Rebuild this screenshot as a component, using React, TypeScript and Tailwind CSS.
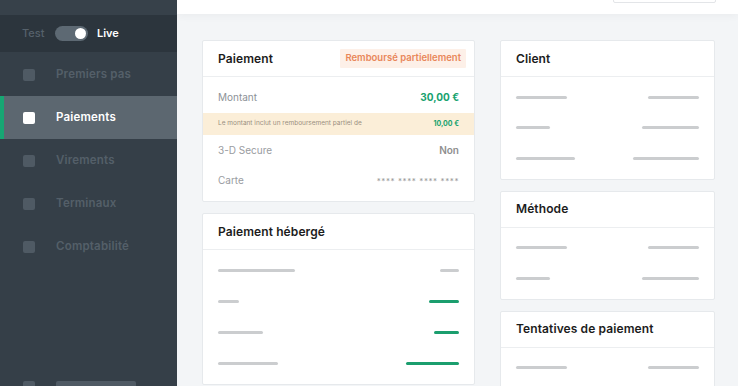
import React from 'react';

const font = { fontFamily: 'Inter, "Noto Sans", "Liberation Sans", sans-serif' };

type NavItem = { label: string; active?: boolean };

const navItems: NavItem[] = [
  { label: 'Premiers pas' },
  { label: 'Paiements', active: true },
  { label: 'Virements' },
  { label: 'Terminaux' },
  { label: 'Comptabilité' },
];

function Sidebar() {
  return (
    <aside className="w-[177px] shrink-0 h-full bg-[#353f48] flex flex-col overflow-hidden">
      <div className="h-[15px] shrink-0 bg-[#37414a]" />
      {/* Test / Live switch */}
      <div className="h-[37px] shrink-0 bg-[#2c353d] flex items-center pl-[22px]">
        <span className="text-[11px] font-medium text-[#56616b] w-[33px]">Test</span>
        <div className="w-[33px] h-[15px] rounded-full bg-[#5d6973] flex items-center justify-end pr-[2px]">
          <div className="w-[11px] h-[11px] rounded-full bg-white" />
        </div>
        <span className="ml-[9px] text-[11px] font-semibold text-white">Live</span>
      </div>

      <nav className="flex flex-col shrink-0 pt-px">
        {navItems.map(item => (
          <div
            key={item.label}
            className={`h-[43px] shrink-0 flex items-center ${item.active ? 'bg-[#5c6770] border-l-4 border-[#17a673] pl-[19px]' : 'pl-[23px]'}`}
          >
            <div className={`w-[12px] h-[12px] rounded-[2px] ${item.active ? 'bg-white' : 'bg-[#4f5a64]'}`} />
            <span className={`ml-[21px] text-[11.5px] font-semibold tracking-[0.2px] ${item.active ? 'text-white' : 'text-[#545f69]'}`}>
              {item.label}
            </span>
          </div>
        ))}
      </nav>

      {/* Bottom item, mostly cut off */}
      <div className="mt-[97px] h-[43px] shrink-0 flex items-center pl-[23px]">
        <div className="w-[12px] h-[12px] rounded-[2px] bg-[#4f5a64]" />
        <div className="ml-[21px] w-[80px] h-[12px] rounded-[2px] bg-[#4f5a64]" />
      </div>
    </aside>
  );
}

function Card({ title, badge, children }: { title: string; badge?: React.ReactNode; children: React.ReactNode }) {
  return (
    <div className="bg-white border border-[#e6e9ec] rounded-[2px] shrink-0">
      <div className="h-[36px] border-b border-[#eceef0] flex items-center justify-between pl-[15px] pr-[8px]">
        <h3 className="text-[12px] font-semibold tracking-[0.1px] text-[#1c1c1c]">{title}</h3>
        {badge}
      </div>
      <div className="py-[5px]">{children}</div>
    </div>
  );
}

function Row({ children, h = 'h-[31px]' }: { children: React.ReactNode; h?: string }) {
  return <div className={`${h} flex items-center justify-between px-[15px]`}>{children}</div>;
}

function Bar({ w, green }: { w: number; green?: boolean }) {
  return (
    <div
      className={`h-[3px] rounded-full ${green ? 'bg-[#1b9e6e]' : 'bg-[#cbcdcf]'}`}
      style={{ width: w }}
    />
  );
}

function SkeletonRows({ rows, h }: { rows: [number, number, boolean?][]; h?: string }) {
  return (
    <>
      {rows.map(([l, r, g], i) => (
        <Row key={i} h={h}>
          <Bar w={l} />
          <Bar w={r} green={g} />
        </Row>
      ))}
    </>
  );
}

export default function App() {
  return (
    <div className="w-[738px] h-[386px] flex overflow-hidden bg-[#f3f5f7]" style={font}>
      <Sidebar />
      <main className="flex-1 flex flex-col min-w-0 overflow-hidden">
        <header className="h-[14px] shrink-0 bg-white flex justify-end items-end overflow-hidden pr-[22px] pb-[11px] shadow-[0_2px_8px_rgba(0,0,0,0.04)] relative z-10">
          <div className="w-[103px] h-[30px] shrink-0 border border-[#e3e5e8] rounded-[2px] bg-white" />
        </header>

        <div className="flex gap-[25px] pl-[25px] pt-[26px] shrink-0">
          {/* Left column */}
          <div className="w-[273px] flex flex-col gap-[11px]">
            <Card
              title="Paiement"
              badge={
                <span className="h-[19px] px-[5px] flex items-center bg-[#fdf0e8] text-[#e9875a] text-[9.5px] font-semibold rounded-[1px]">
                  Remboursé partiellement
                </span>
              }
            >
              <Row>
                <span className="text-[10px] text-[#8d9297]">Montant</span>
                <span className="text-[10px] font-bold text-[#17a26f]">30,00 €</span>
              </Row>
              <div className="h-[22px] bg-[#fbeed8] flex items-center justify-between px-[15px]">
                <span className="text-[6.5px] text-[#9a8f80]">Le montant inclut un remboursement partiel de</span>
                <span className="text-[7px] font-bold text-[#17a26f]">10,00 €</span>
              </div>
              <Row h="h-[30px]">
                <span className="text-[10px] text-[#999c9f]">3-D Secure</span>
                <span className="text-[10px] font-semibold text-[#8e8e8e]">Non</span>
              </Row>
              <Row h="h-[31px]">
                <span className="text-[10px] text-[#999c9f]">Carte</span>
                <span className="text-[8px] tracking-[0.6px] text-[#9a9a9a]">**** **** **** ****</span>
              </Row>
            </Card>

            <Card title="Paiement hébergé">
              <SkeletonRows
                rows={[
                  [77, 19],
                  [21, 30, true],
                  [45, 25, true],
                  [60, 53, true],
                ]}
              />
            </Card>
          </div>

          {/* Right column */}
          <div className="w-[215px] flex flex-col gap-[11px]">
            <Card title="Client">
              <SkeletonRows
                h="h-[30.5px]"
                rows={[
                  [51, 51],
                  [34, 57],
                  [59, 66],
                ]}
              />
            </Card>
            <Card title="Méthode">
              <SkeletonRows
                h="h-[30.5px]"
                rows={[
                  [51, 51],
                  [34, 57],
                ]}
              />
            </Card>
            <Card title="Tentatives de paiement">
              <SkeletonRows
                h="h-[30.5px]"
                rows={[
                  [51, 51],
                  [34, 57],
                ]}
              />
            </Card>
          </div>
        </div>
      </main>
    </div>
  );
}
